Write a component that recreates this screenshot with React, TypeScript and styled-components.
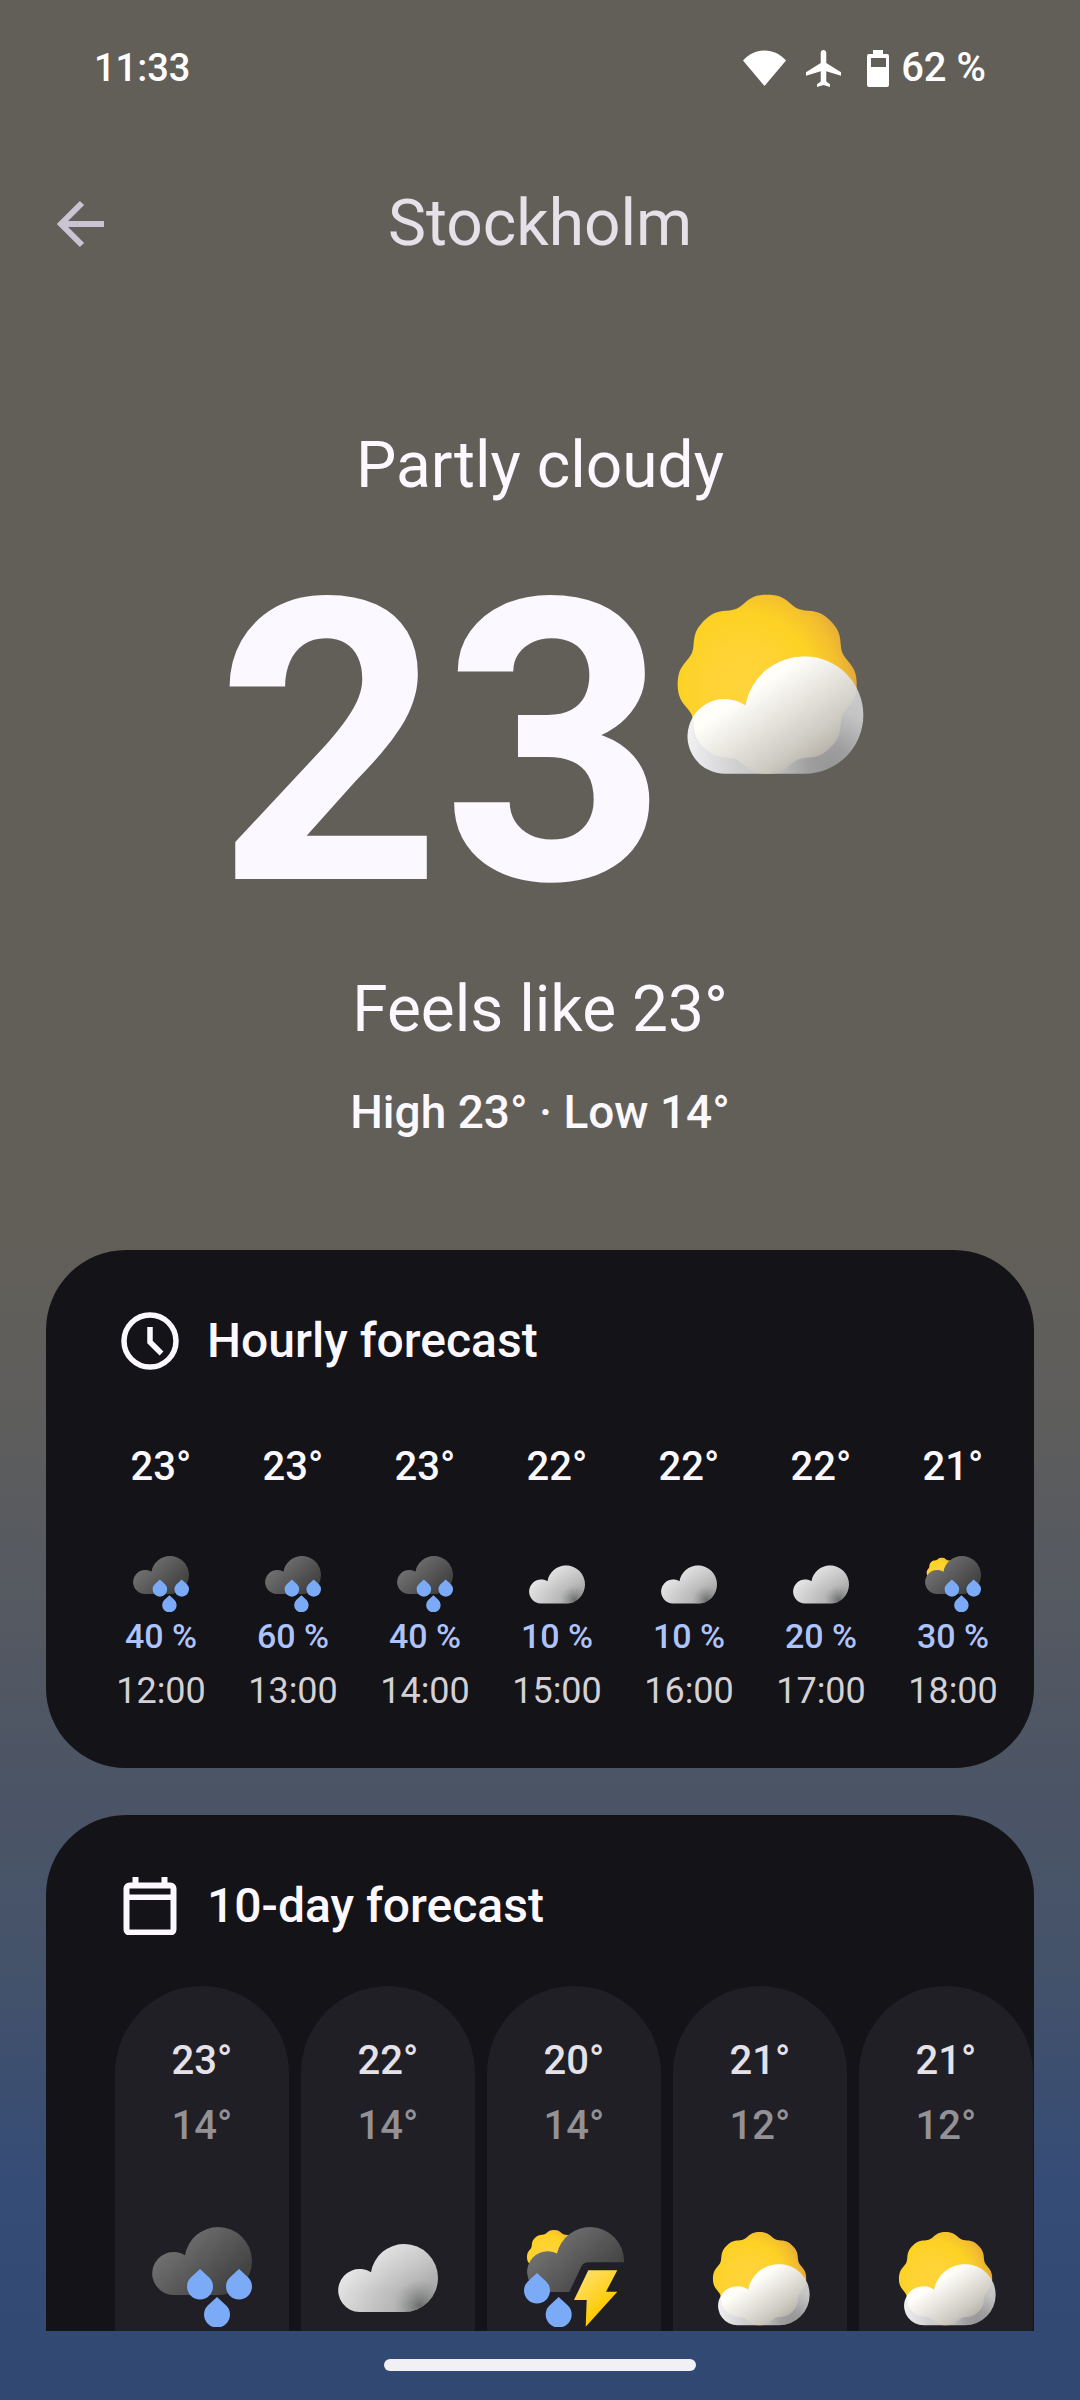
import React from "react";
import styled, { createGlobalStyle } from "styled-components";

const color = {
  text: "#fbf8ff",
  title: "#e4e1e9",
  muted: "#d3d0d6",
  dim: "#939196",
  rain: "#aec3fb",
  card: "#141318",
  pill: "#201f25",
};

const GlobalStyle = createGlobalStyle`
  *, *::before, *::after { box-sizing: border-box; }
  body {
    margin: 0;
    background: #314972;
    color: ${color.text};
    font-family: Roboto, "Open Sans", sans-serif;
  }
  h1, h2, p, ul { margin: 0; padding: 0; font-weight: 400; }
  ul { list-style: none; }
`;

const Screen = styled.div`
  display: flex;
  flex-direction: column;
  height: 100vh;
  background: linear-gradient(
    180deg,
    #625f59 0%,
    #625f59 52%,
    #5d5d5d 60%,
    #4c5565 74%,
    #44526a 82%,
    #354c76 91%,
    #304872 100%
  );
`;

const StatusBar = styled.div`
  display: flex;
  flex: none;
  align-items: center;
  justify-content: space-between;
  height: 136px;
  padding: 0 94px;
  font-size: 38px;
  font-weight: 500;
  line-height: 48px;
  color: #fff;
`;

const StatusIcons = styled.div`
  display: flex;
  align-items: center;
  gap: 20px;
`;

const Battery = styled.div`
  display: flex;
  align-items: center;
  gap: 12px;
  margin-left: 6px;
  font-size: 40px;
`;

const AppBar = styled.header`
  display: grid;
  grid-template-columns: 72px 1fr 72px;
  flex: none;
  align-items: center;
  height: 176px;
  padding: 0 44px;
`;

const BackButton = styled.button`
  display: grid;
  place-items: center;
  width: 72px;
  height: 72px;
  padding: 0;
  border: 0;
  background: none;
  color: #c8c4d3;
  cursor: pointer;
`;

const City = styled.h1`
  font-size: 64px;
  line-height: 76px;
  text-align: center;
  color: ${color.title};
`;

const Content = styled.main`
  flex: 1;
  min-height: 0;
  padding: 0 46px;
  overflow: hidden auto;
  scrollbar-width: none;
`;

const Hero = styled.section`
  display: flex;
  flex-direction: column;
  align-items: center;
  padding: 116px 0 110px;
`;

const HeroLine = styled.p`
  font-size: 64px;
  line-height: 76px;
`;

const HeroNow = styled.div`
  display: flex;
  margin: 40px 0 28px;
`;

const HeroTemp = styled.p`
  font-size: 394px;
  font-weight: 700;
  line-height: 400px;
`;

const HeroIcon = styled.div`
  display: flex;
  padding: 41px 0 0 4px;
`;

const HeroRange = styled.p`
  margin-top: 36px;
  font-size: 46px;
  font-weight: 500;
  line-height: 56px;
`;

const Cards = styled.div`
  display: flex;
  flex-direction: column;
  gap: 47px;
`;

const Card = styled.section`
  padding: 61px 0 55px;
  border-radius: 80px;
  background: ${color.card};
  overflow: hidden;
`;

const CardHeader = styled.header`
  display: flex;
  align-items: center;
  gap: 28px;
  height: 60px;
  padding: 0 75px;
`;

const CardTitle = styled.h2`
  font-size: 48px;
  font-weight: 500;
  line-height: 56px;
`;

const HourList = styled.ul`
  display: flex;
  margin-top: 72px;
  padding-left: 49px;
  overflow-x: auto;
  scrollbar-width: none;
`;

const Hour = styled.li`
  display: flex;
  flex: none;
  flex-direction: column;
  align-items: center;
  width: 132px;
`;

const Temp = styled.p<{ $tone: string }>`
  font-size: 40px;
  font-weight: 500;
  line-height: 48px;
  color: ${(p) => p.$tone};
`;

const HourIcon = styled.div`
  display: flex;
  margin: 65px 0 4px;
`;

const Chance = styled.p`
  font-size: 34px;
  font-weight: 500;
  line-height: 40px;
  color: ${color.rain};
`;

const HourTime = styled.p`
  margin-top: 13px;
  font-size: 36px;
  line-height: 44px;
  color: ${color.muted};
`;

const DayList = styled.ul`
  display: flex;
  gap: 12px;
  margin-top: 50px;
  padding-left: 69px;
  overflow-x: auto;
  scrollbar-width: none;
`;

const Day = styled.li`
  display: flex;
  flex: none;
  flex-direction: column;
  align-items: center;
  gap: 17px;
  width: 174px;
  padding: 51px 0 87px;
  border-radius: 87px;
  background: ${color.pill};
`;

const DayIcon = styled.div`
  display: flex;
  margin-top: 60px;
`;

const NavBar = styled.footer`
  display: flex;
  flex: none;
  justify-content: center;
  height: 69px;
  padding-top: 28px;
`;

const HomeHandle = styled.div`
  width: 312px;
  height: 12px;
  border-radius: 6px;
  background: #f0f0f5;
`;

const HiddenSvg = styled.svg`
  position: absolute;
`;

/* Eight-lobed sun outline around (cx, cy): round crests, tighter valleys. */
function sunPath(cx: number, cy: number, r: number) {
  const steps = 160;
  const points: string[] = [];
  for (let i = 0; i < steps; i++) {
    const a = (i / steps) * Math.PI * 2;
    const d = r * (0.964 + 0.045 * (Math.cos(a * 8) - 0.2 * Math.cos(a * 16)));
    points.push(`${(cx + d * Math.cos(a)).toFixed(2)} ${(cy + d * Math.sin(a)).toFixed(2)}`);
  }
  return `M${points.join("L")}Z`;
}

const BIG_SUN = sunPath(322, 341, 269);
const SMALL_SUN = sunPath(30, 30, 27);
const BIG_CLOUD =
  "M196 610A112 112 0 1 1 257 405A178 178 0 0 1 435 258A176 176 0 0 1 435 610Z";
const CLOUD =
  "M21.5 68A21.5 21.5 0 1 1 33 28.2A33.8 33.8 0 0 1 66 0A34 34 0 0 1 66 68Z";

function SharedDefs() {
  return (
    <HiddenSvg width="0" height="0" aria-hidden="true">
      <defs>
        <radialGradient id="sun" cx="0.37" cy="0.5" r="0.68">
          <stop offset="0" stopColor="#ffd43b" />
          <stop offset="0.3" stopColor="#ffd333" />
          <stop offset="0.58" stopColor="#fdd224" />
          <stop offset="0.78" stopColor="#f3bf2e" />
          <stop offset="1" stopColor="#dd9d3c" />
        </radialGradient>
        <linearGradient id="dark" x1="0.1" y1="0.2" x2="0.85" y2="0.75">
          <stop offset="0" stopColor="#767676" />
          <stop offset="1" stopColor="#434343" />
        </linearGradient>
        <linearGradient id="light" x1="0" y1="0.4" x2="0.9" y2="0.7">
          <stop offset="0" stopColor="#e8e8e8" />
          <stop offset="0.55" stopColor="#c2c2c2" />
          <stop offset="1" stopColor="#a6a6a6" />
        </linearGradient>
        <linearGradient id="lightTop" x1="0" y1="0" x2="0" y2="1">
          <stop offset="0" stopColor="#fff" stopOpacity="0.4" />
          <stop offset="0.7" stopColor="#fff" stopOpacity="0" />
        </linearGradient>
        <radialGradient id="lightShade" gradientUnits="userSpaceOnUse" cx="82" cy="62" r="26">
          <stop offset="0" stopColor="#626664" stopOpacity="0.9" />
          <stop offset="1" stopColor="#8a8c8b" stopOpacity="0" />
        </radialGradient>
        <radialGradient id="cool" gradientUnits="userSpaceOnUse" cx="510" cy="590" r="430">
          <stop offset="0" stopColor="#969696" />
          <stop offset="0.15" stopColor="#9f9f9f" />
          <stop offset="0.4" stopColor="#c4c4c4" />
          <stop offset="0.65" stopColor="#cfcfd0" />
          <stop offset="1" stopColor="#f0f0f3" />
        </radialGradient>
        <linearGradient id="warm" gradientUnits="userSpaceOnUse" x1="290" y1="355" x2="450" y2="590">
          <stop offset="0" stopColor="#fffef8" />
          <stop offset="0.35" stopColor="#e8e6df" />
          <stop offset="0.75" stopColor="#cdcac2" />
          <stop offset="1" stopColor="#b5b1a7" />
        </linearGradient>
        <linearGradient id="bolt" x1="0.15" y1="0.1" x2="0.6" y2="0.75">
          <stop offset="0" stopColor="#ffe06a" />
          <stop offset="1" stopColor="#fecb00" />
        </linearGradient>
        <clipPath id="insideSun">
          <path d={BIG_SUN} />
        </clipPath>
      </defs>
    </HiddenSvg>
  );
}

function Drop({ x, y }: { x: number; y: number }) {
  return (
    <path
      d={`M${x} ${y}L${x + 9.2} ${y + 8.4}A13 13 0 1 1 ${x - 9.2} ${y + 8.4}Z`}
      fill="#7baaf7"
    />
  );
}

type Weather = "partly" | "cloudy" | "rain" | "sunRain" | "storm";

const weatherName: Record<Weather, string> = {
  partly: "Partly cloudy",
  cloudy: "Cloudy",
  rain: "Rain",
  sunRain: "Scattered showers",
  storm: "Thunderstorms",
};

function WeatherIcon({ kind, size }: { kind: Weather; size: number }) {
  if (kind === "partly") {
    return (
      <svg width={size} height={size} viewBox="36 43 577 577" role="img" aria-label={weatherName[kind]}>
        <path d={BIG_SUN} fill="url(#sun)" />
        <path d={BIG_CLOUD} fill="url(#cool)" />
        <path d={BIG_CLOUD} fill="url(#warm)" clipPath="url(#insideSun)" />
      </svg>
    );
  }
  return (
    <svg width={size} height={size} viewBox="0 0 100 100" role="img" aria-label={weatherName[kind]}>
      {kind === "cloudy" && (
        <g transform="translate(0 17)">
          <path d={CLOUD} fill="url(#light)" />
          <path d={CLOUD} fill="url(#lightTop)" />
          <path d={CLOUD} fill="url(#lightShade)" />
        </g>
      )}
      {(kind === "sunRain" || kind === "storm") && <path d={SMALL_SUN} fill="url(#sun)" />}
      {(kind === "rain" || kind === "sunRain") && (
        <>
          <path d={CLOUD} fill="url(#dark)" />
          <Drop x={48} y={42} />
          <Drop x={87} y={42} />
          <Drop x={65} y={70} />
        </>
      )}
      {kind === "storm" && (
        <>
          <path
            d="M20.5 65A20.5 20.5 0 1 1 33 26.5A34 34 0 0 1 66 0A34 34 0 0 1 100 35.3L64.5 35.3Q59.5 35.3 57.3 39.5L45.3 65Z"
            fill="url(#dark)"
          />
          <Drop x={13} y={46} />
          <Drop x={34.7} y={70} />
          <path
            d="M64.3 43.3H93.3L82 64.7H93.3L61.7 99.7L62.7 73H50Z"
            fill="url(#bolt)"
          />
        </>
      )}
    </svg>
  );
}

function WifiIcon() {
  return (
    <svg width="43" height="36" viewBox="0 0 43 36" aria-hidden="true">
      <path d="M21.5 36L0 10.5C6 4 13 .5 21.5 .5S37 4 43 10.5Z" fill="currentColor" />
    </svg>
  );
}

function PlaneIcon() {
  return (
    <svg width="35" height="37" viewBox="2 2 19 20" aria-hidden="true">
      <path
        d="M21 16v-2l-8-5V3.5c0-.83-.67-1.5-1.5-1.5S10 2.67 10 3.5V9l-8 5v2l8-2.5V19l-2 1.5V22l3.5-1 3.5 1v-1.5L13 19v-5.5l8 2.5z"
        fill="currentColor"
      />
    </svg>
  );
}

function BatteryIcon() {
  return (
    <svg width="22" height="37" viewBox="0 0 22 37" aria-hidden="true">
      <path
        fillRule="evenodd"
        d="M6 0H16V4H20A2 2 0 0 1 22 6V35A2 2 0 0 1 20 37H2A2 2 0 0 1 0 35V6A2 2 0 0 1 2 4H6ZM4 8V17H19V8Z"
        fill="currentColor"
      />
    </svg>
  );
}

function ArrowIcon() {
  return (
    <svg width="48" height="48" viewBox="0 0 48 48" aria-hidden="true">
      <path d="M26 3L5 24L26 45M5 24H48" fill="none" stroke="currentColor" strokeWidth="6" />
    </svg>
  );
}

function ClockIcon() {
  return (
    <svg width="58" height="58" viewBox="0 0 58 58" aria-hidden="true">
      <g fill="none" stroke="currentColor" strokeWidth="5.5">
        <circle cx="29" cy="29" r="26" />
        <path d="M29 15V30L40.5 41.5" />
      </g>
    </svg>
  );
}

function CalendarIcon() {
  return (
    <svg width="58" height="58" viewBox="0 0 58 58" aria-hidden="true">
      <rect x="5.5" y="8.5" width="47" height="47" rx="3" fill="none" stroke="currentColor" strokeWidth="6" />
      <path d="M11.5 0H17.5V8H11.5ZM40.5 0H46.5V8H40.5ZM5 17.5H53V23H5Z" fill="currentColor" />
    </svg>
  );
}

const hours: { temp: string; kind: Weather; chance: string; time: string }[] = [
  { temp: "23°", kind: "rain", chance: "40 %", time: "12:00" },
  { temp: "23°", kind: "rain", chance: "60 %", time: "13:00" },
  { temp: "23°", kind: "rain", chance: "40 %", time: "14:00" },
  { temp: "22°", kind: "cloudy", chance: "10 %", time: "15:00" },
  { temp: "22°", kind: "cloudy", chance: "10 %", time: "16:00" },
  { temp: "22°", kind: "cloudy", chance: "20 %", time: "17:00" },
  { temp: "21°", kind: "sunRain", chance: "30 %", time: "18:00" },
];

const days: { high: string; low: string; kind: Weather }[] = [
  { high: "23°", low: "14°", kind: "rain" },
  { high: "22°", low: "14°", kind: "cloudy" },
  { high: "20°", low: "14°", kind: "storm" },
  { high: "21°", low: "12°", kind: "partly" },
  { high: "21°", low: "12°", kind: "partly" },
];

export default function App() {
  return (
    <>
      <GlobalStyle />
      <SharedDefs />
      <Screen>
        <StatusBar>
          <span>11:33</span>
          <StatusIcons>
            <WifiIcon />
            <PlaneIcon />
            <Battery>
              <BatteryIcon />
              <span>62 %</span>
            </Battery>
          </StatusIcons>
        </StatusBar>
        <AppBar>
          <BackButton type="button" aria-label="Back">
            <ArrowIcon />
          </BackButton>
          <City>Stockholm</City>
        </AppBar>
        <Content>
          <Hero>
            <HeroLine>Partly cloudy</HeroLine>
            <HeroNow>
              <HeroTemp>23</HeroTemp>
              <HeroIcon>
                <WeatherIcon kind="partly" size={192} />
              </HeroIcon>
            </HeroNow>
            <HeroLine>Feels like 23°</HeroLine>
            <HeroRange>High 23° · Low 14°</HeroRange>
          </Hero>
          <Cards>
            <Card>
              <CardHeader>
                <ClockIcon />
                <CardTitle>Hourly forecast</CardTitle>
              </CardHeader>
              <HourList>
                {hours.map((h) => (
                  <Hour key={h.time}>
                    <Temp $tone={color.text}>{h.temp}</Temp>
                    <HourIcon>
                      <WeatherIcon kind={h.kind} size={56} />
                    </HourIcon>
                    <Chance>{h.chance}</Chance>
                    <HourTime>{h.time}</HourTime>
                  </Hour>
                ))}
              </HourList>
            </Card>
            <Card>
              <CardHeader>
                <CalendarIcon />
                <CardTitle>10-day forecast</CardTitle>
              </CardHeader>
              <DayList>
                {days.map((d, i) => (
                  <Day key={i}>
                    <Temp $tone={color.title}>{d.high}</Temp>
                    <Temp $tone={color.dim}>{d.low}</Temp>
                    <DayIcon>
                      <WeatherIcon kind={d.kind} size={100} />
                    </DayIcon>
                  </Day>
                ))}
              </DayList>
            </Card>
          </Cards>
        </Content>
        <NavBar>
          <HomeHandle />
        </NavBar>
      </Screen>
    </>
  );
}
